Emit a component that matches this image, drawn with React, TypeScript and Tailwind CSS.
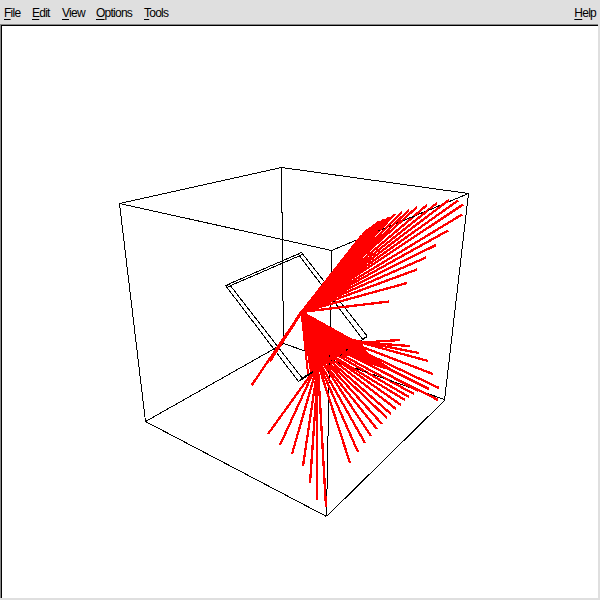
import React from "react";

const menus = [
  { name: "File", width: "w-[28px]" },
  { name: "Edit", width: "w-[30px]" },
  { name: "View", width: "w-[34px]" },
  { name: "Options", width: "w-[48px]" },
  { name: "Tools", width: "w-[30px]" },
];

const boxLines = [
  [119, 203, 281, 167], [281, 167, 468, 193], [468, 193, 331, 250], [331, 250, 119, 203],
  [119, 203, 145, 421], [145, 421, 326, 516], [326, 516, 444, 400], [444, 400, 468, 193],
  [331, 250, 326, 516], [281, 167, 283, 343], [283, 343, 145, 421], [283, 343, 444, 399],
  [225, 285, 301, 252], [228, 286, 302, 254], [225, 285, 298, 381], [229, 284, 302, 378],
  [301, 252, 367, 336], [298, 254, 363, 340], [298, 381, 363, 340], [301, 378, 367, 336],
  [225, 285, 229, 284], [298, 381, 302, 378],
];

const upper = [
  [389, 301.5], [407, 283], [417, 269.5], [426, 257.5], [436, 245], [448, 230.5], [462, 214.5],
  [463, 204.5], [458, 200.5], [449, 200], [437, 203], [427, 205], [417, 207], [409, 210],
  [402, 212], [395, 214], [389, 217], [384, 219], [379, 221], [375, 224], [371, 227],
  [368, 229], [365, 232], [362, 235], [360, 238],
];

const lower = [
  [356, 343, 400, 340], [355, 342, 410, 346], [352, 340, 419, 353], [348, 339, 428, 361],
  [344, 340, 433, 374], [340, 341, 439, 388], [337, 343, 429, 389], [340, 350, 438, 400],
  [335, 346, 418, 391], [333, 350, 414, 394], [332, 352, 409, 397], [331, 355, 405, 400],
  [330, 355, 401, 405], [329, 357, 396, 409], [328, 359, 391, 414], [326, 360, 387, 418],
  [324, 360, 382, 424], [323, 362, 377, 429], [322, 362, 371, 436], [321, 365, 365, 443],
  [320, 366, 358, 452], [319, 367, 350, 463], [318, 367, 326, 507], [317, 370, 317, 500],
  [318, 370, 310, 483], [317, 372, 303, 466], [315, 374, 292, 454], [313, 373, 280, 445],
  [312, 373, 268, 434],
];

export default function App() {
  return (
    <div className="flex h-[600px] w-[600px] flex-col bg-[#dfdfdf] font-['Liberation_Sans',Arial,sans-serif] text-[12px] leading-[16px] text-black">
      <div className="flex h-6 shrink-0 items-center justify-between pr-[4px] pl-1 pt-[2px] tracking-[-0.75px]">
        <div className="flex">
          {menus.map(({ name, width }) => (
            <span key={name} className={width}><u className="underline underline-offset-2">{name[0]}</u>{name.slice(1)}</span>
          ))}
        </div>
        <span><u className="underline underline-offset-2">H</u>elp</span>
      </div>
      <div className="mr-[2px] mb-[2px] flex-1 border-t border-l border-[#888]">
        <div className="h-full w-full overflow-hidden border-t border-l border-black bg-white">
          <svg className="block" width="596" height="572" viewBox="2 26 596 572" shapeRendering="crispEdges" fill="none">
            <g stroke="#000" strokeWidth="1">
              {boxLines.map(([a, b, c, d], i) => <line key={i} x1={a + 0.5} y1={b + 0.5} x2={c + 0.5} y2={d + 0.5} />)}
            </g>
            <g stroke="#f00" strokeWidth="2.3">
              {upper.map(([x, y], i) => <line key={i} x1="301.5" y1="312" x2={x} y2={y} />)}
              {lower.map(([a, b, c, d], i) => <polyline key={i} points={`301.5,312 ${a},${b} ${c},${d}`} />)}
              <path d="M301.5 312L308 374M301.5 312L311 372M301.5 312L314 371" strokeWidth="2" />
              <line x1="301.5" y1="312" x2="251.5" y2="385.5" />
              <line x1="301.5" y1="312" x2="269.5" y2="361.5" strokeWidth="3" />
            </g>
            <path d="M301 312L304 341L308 354L313 350L317 368L321 368L322 352L332 358L350 356L372 365L398 373L368 353L362 343L354 341Z" fill="#f00" />
            <path d="M302 312L360 236L380 223L374 235L376 240L352 268L335 288Z" fill="#f00" />
            <g stroke="#000" strokeWidth="1">
              <path d="M378.500 230.500L385 228" strokeDasharray="2 3" />
              <path d="M403 221L441 205" strokeDasharray="4 5" />
              <path d="M356 368.500L400 384" strokeDasharray="3 6" />
              <path d="M303 378L313 372M363 339L367 336.500" strokeWidth="1.5" />
              <path d="M329.500 355L328.500 378M334 361L351 346" strokeDasharray="2 6" />
            </g>
          </svg>
        </div>
      </div>
    </div>
  );
}
